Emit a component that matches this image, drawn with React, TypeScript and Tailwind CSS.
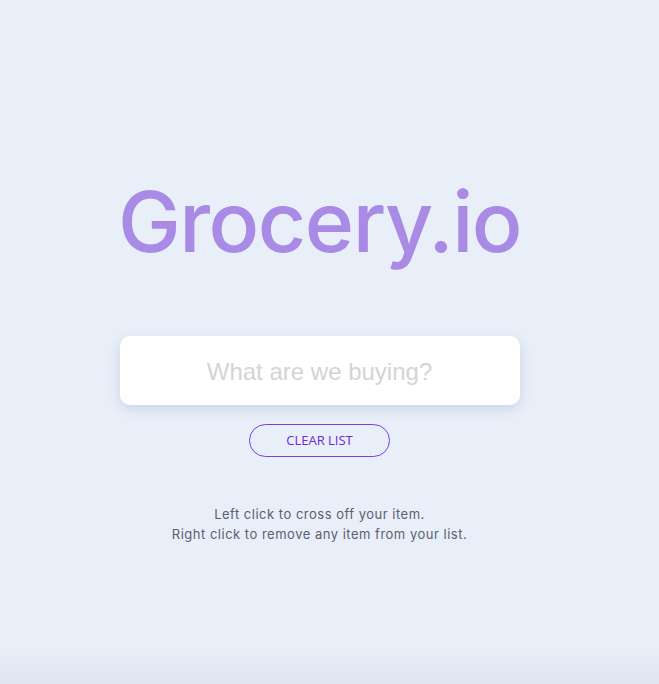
import React from "react";

export default function App() {
  return (
    <div className="relative w-full h-[684px] bg-[#e8eff9] overflow-hidden">
      <div className="w-[639px] flex flex-col items-center pt-[180px]">
        <h1
          className="text-[84px] leading-none font-medium text-[#a98be6] tracking-[-1.5px]"
          style={{ fontFamily: "Inter, 'Noto Sans', sans-serif" }}
        >
          Grocery.io
        </h1>
        <div className="mt-[72px] w-[400px] h-[69px] bg-white rounded-[10px] shadow-[0_4px_12px_rgba(120,140,180,0.25)] flex items-center justify-center pt-[3px]">
          <input
            placeholder="What are we buying?"
            className="w-full text-center bg-transparent outline-none text-[24px] placeholder:text-[#d4d4d4]"
            style={{ fontFamily: "'Liberation Sans', Arial, sans-serif" }}
          />
        </div>
        <button
          className="mt-[19px] w-[141px] h-[33px] rounded-full border border-[#7c3aed] text-[#6d28d9] text-[13px] bg-transparent"
          style={{ fontFamily: "'Open Sans', 'Noto Sans', sans-serif" }}
        >
          CLEAR LIST
        </button>
        <div
          className="mt-[47px] text-center text-[13px] leading-[20px] text-[#5b6070] tracking-[0.5px]"
          style={{ fontFamily: "Inter, 'Noto Sans', sans-serif" }}
        >
          <p>Left click to cross off your item.</p>
          <p>Right click to remove any item from your list.</p>
        </div>
      </div>
      <div className="absolute left-0 right-0 bottom-0 h-[40px] bg-gradient-to-b from-[#e8eff9] to-[#dfe6f1]" />
    </div>
  );
}
